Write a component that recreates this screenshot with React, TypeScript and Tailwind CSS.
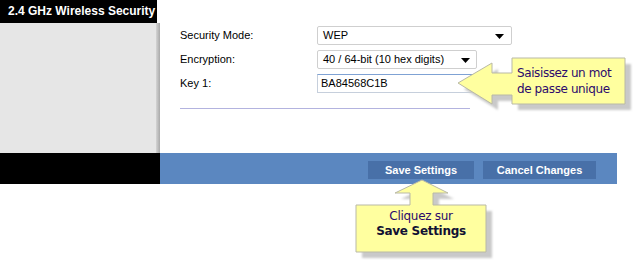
import React from "react";

function Arrow(props: { className: string }) {
  return (
    <svg className={props.className} width="9" height="5" viewBox="0 0 9 5">
      <path d="M0 0 H9 L4.5 5 Z" fill="#000" />
    </svg>
  );
}

function Callouts() {
  const right =
    "458,83 492,63 492,73 512,73 512,58 625,58 625,104 512,104 512,95 492,95 492,104";
  const bottom =
    "422,180 395,193 410,193 410,205 356,205 356,252 486,252 486,205 433,205 433,193 448,193";
  return (
    <svg
      className="absolute left-0 top-0 pointer-events-none"
      width="634"
      height="261"
      viewBox="0 0 634 261"
    >
      <defs>
        <filter id="soft" x="-10%" y="-10%" width="130%" height="130%">
          <feGaussianBlur stdDeviation="1.2" />
        </filter>
      </defs>
      <g transform="translate(6,6)" filter="url(#soft)" fill="#c9c9c9">
        <polygon points={right} />
        <polygon points={bottom} />
      </g>
      <g fill="#ffff9f" stroke="#b9b9a6" strokeWidth="1">
        <polygon points={right} />
        <polygon points={bottom} />
      </g>
    </svg>
  );
}

export default function App() {
  return (
    <div className="relative w-[634px] h-[261px] bg-white overflow-hidden font-['Liberation_Sans',Arial,sans-serif] text-[11px] text-black">
      <div className="flex h-[153px]">
        <div className="w-[160px] flex flex-col">
          <div className="h-[23px] w-[157px] bg-black text-white font-bold text-[12px] pl-[8px] leading-[23px]">
            2.4 GHz Wireless Security
          </div>
          <div className="flex-1 flex">
            <div className="flex-1 bg-[#e6e6e6]" />
            <div className="w-[4px] bg-linear-to-r from-[#d4d4d4] to-[#a9a9a9]" />
          </div>
        </div>
        <div className="flex-1 pl-[20px] pt-[26px]">
          <div className="flex flex-col gap-[5px]">
            <div className="flex items-center h-[19px]">
              <span className="w-[137px]">Security Mode:</span>
              <div className="relative w-[195px] h-[19px] border border-[#cfcfcf] rounded-[2px] pl-[5px] leading-[17px]">
                WEP
                <Arrow className="absolute right-[7px] top-[7px]" />
              </div>
            </div>
            <div className="flex items-center h-[19px]">
              <span className="w-[137px]">Encryption:</span>
              <div className="relative w-[160px] h-[19px] border border-[#cfcfcf] rounded-[2px] pl-[5px] leading-[17px]">
                40 / 64-bit (10 hex digits)
                <Arrow className="absolute right-[6px] top-[7px]" />
              </div>
            </div>
            <div className="flex items-center h-[19px]">
              <span className="w-[137px]">Key 1:</span>
              <div className="w-[195px] h-[19px] border border-[#c6cfdc] border-t-[#7fa2d4] pl-[3px] leading-[17px]">
                BA84568C1B
              </div>
            </div>
          </div>
          <div className="mt-[15px] w-[290px] h-px bg-[#b3b3df]" />
        </div>
      </div>
      <div className="flex h-[31px]">
        <div className="w-[160px] bg-black" />
        <div className="w-[457px] bg-[#5b87c0] flex items-center justify-end gap-[9px] pr-[21px] pt-[2px]">
          <div className="w-[106px] h-[18px] bg-[#4870a8] text-white font-bold text-center leading-[18px]">
            Save Settings
          </div>
          <div className="w-[113px] h-[18px] bg-[#4870a8] text-white font-bold text-center leading-[18px]">
            Cancel Changes
          </div>
        </div>
      </div>
      <Callouts />
      <div className="absolute left-[517px] top-[65px] text-[12px] leading-[16px] tracking-[-0.4px] text-[#2c0a6c] font-['DejaVu_Sans',Verdana,sans-serif]">
        <div>Saisissez un mot</div>
        <div>de passe unique</div>
      </div>
      <div className="absolute left-[356px] top-[209px] w-[130px] text-center text-[12px] leading-[15px] tracking-[-0.3px] font-['DejaVu_Sans',Verdana,sans-serif]">
        <div className="text-[#2c0a6c]">Cliquez sur</div>
        <div className="font-bold text-[#111133]">Save Settings</div>
      </div>
    </div>
  );
}
